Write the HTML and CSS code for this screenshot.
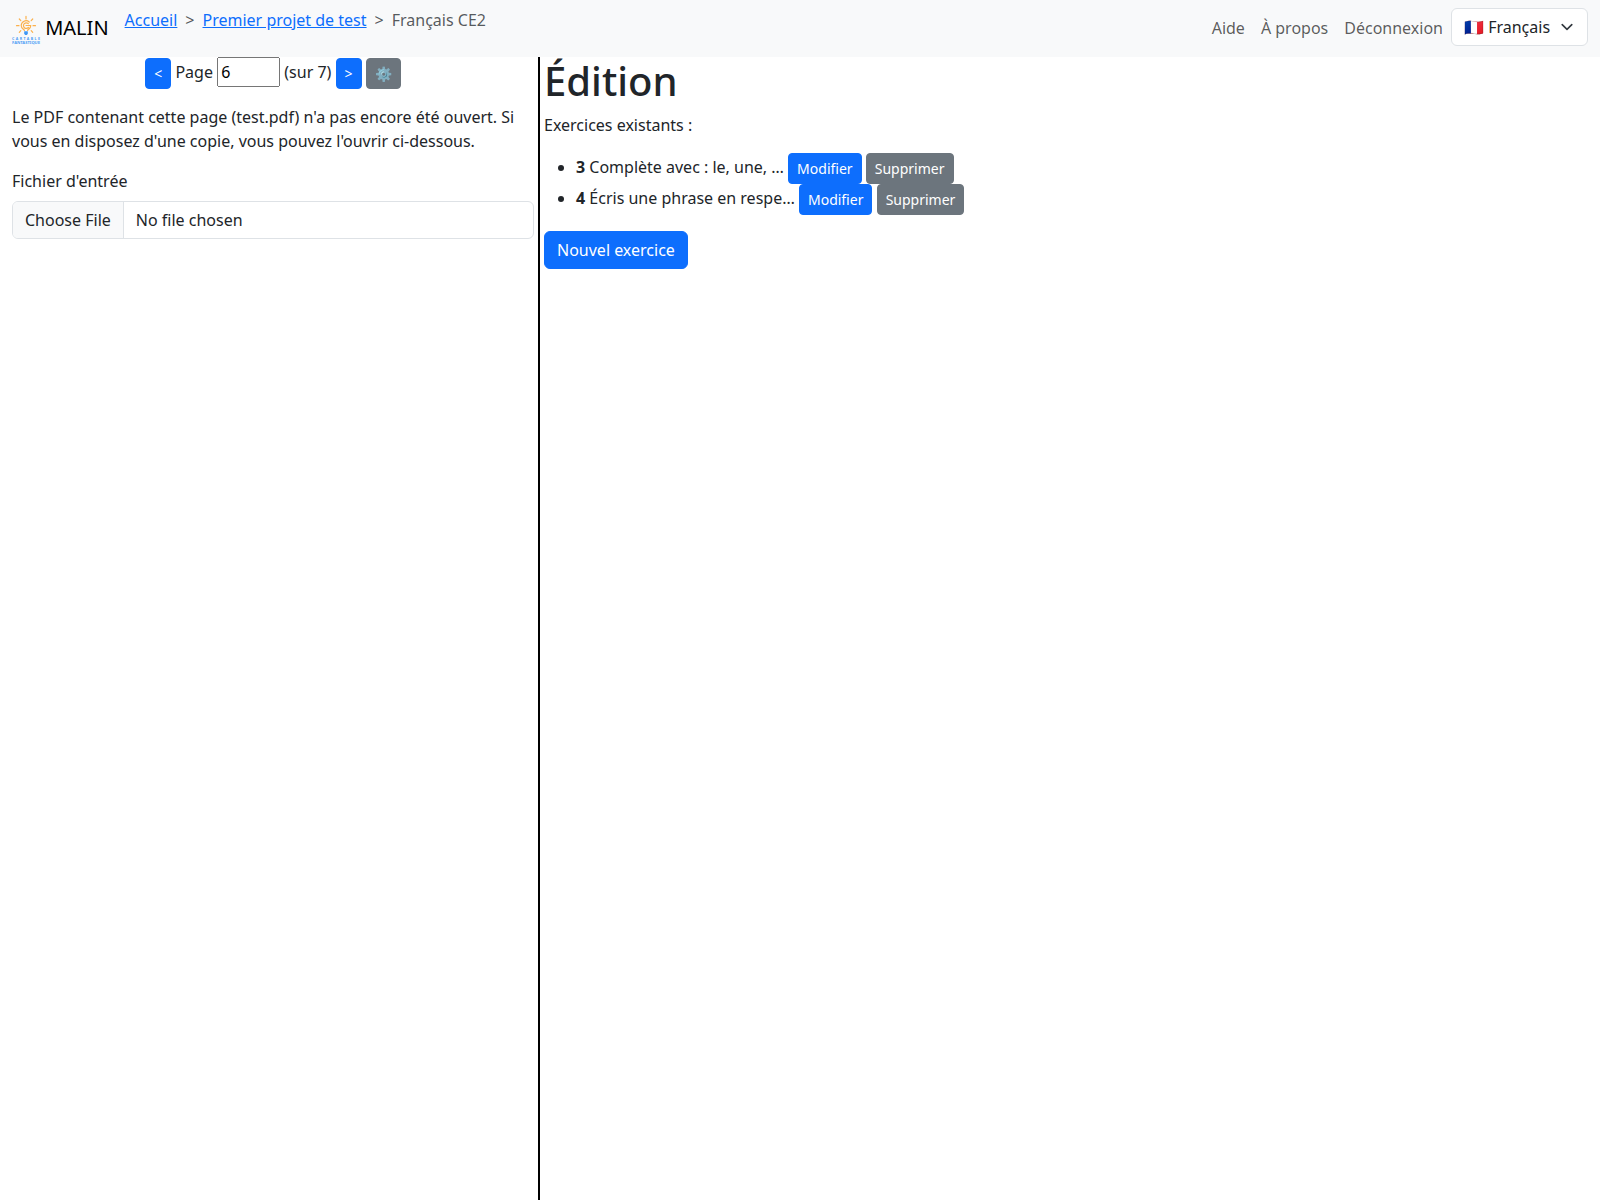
FILE: index.html
```html
<!DOCTYPE html>
<html lang="fr">
<head>
<meta charset="utf-8">
<title>MALIN</title>
<link rel="stylesheet" href="styles.css">
</head>
<body>
<nav class="navbar">
  <a class="brand" href="#"><svg class="logo" viewBox="0 0 28 30" aria-hidden="true">
    <g fill="none" stroke="#fbb14d" stroke-width="1.2" stroke-linecap="round">
      <path d="M14 2.300v2.700M7.300 5l1.500 1.700M20.700 5l-1.500 1.700M4.500 11.700h2.500M21 11.700h2.500M7.300 18.300l1.500-1.700M20.700 18.300l-1.500-1.700"/>
      <path d="M12.400 16.500c-.3-1.200-3.200-2-3.200-5a4.800 4.800 0 0 1 8-3.500M18.800 11.500c0 3-2.900 3.800-3.200 5M16.300 9.700a2.800 2.800 0 1 0 .1 3.800M14 11.500h4.700"/>
    </g>
    <path fill="#3f97f5" d="M12.200 17.300h3.600v2.500l-1 1.300h-1.600l-1-1.300z"/>
    <g class="logo-text" fill="#4c9df5">
      <text x="0" y="26.300" textLength="28">CARTABLE</text>
      <text x="0" y="30" textLength="28" lengthAdjust="spacingAndGlyphs">FANTASTIQUE</text>
    </g>
  </svg> MALIN</a>
  <ol class="breadcrumb">
    <li><a href="#">Accueil</a></li>
    <li><a href="#">Premier projet de test</a></li>
    <li class="current">Français CE2</li>
  </ol>
  <ul class="links">
    <li><a href="#">Aide</a></li>
    <li><a href="#">À propos</a></li>
    <li><a href="#">Déconnexion</a></li>
    <li class="language"><select class="form-select"><option>🇫🇷 Français</option></select><svg class="chevron" viewBox="0 0 16 16" aria-hidden="true"><path d="m2 5 6 6 6-6"/></svg></li>
  </ul>
</nav>
<main class="columns">
  <section class="document">
    <p class="pager"><button class="btn btn-sm primary">&lt;</button> Page <input class="page-number" type="number" value="6"> (sur 7) <button class="btn btn-sm primary">&gt;</button> <button class="btn btn-sm secondary">⚙️</button></p>
    <p>Le PDF contenant cette page (test.pdf) n'a pas encore été ouvert. Si vous en disposez d'une copie, vous pouvez l'ouvrir ci-dessous.</p>
    <label class="form-label" for="pdf">Fichier d'entrée</label>
    <input class="file-input" id="pdf" type="file">
  </section>
  <section class="edition">
    <h1>Édition</h1>
    <p>Exercices existants :</p>
    <ul class="exercises">
      <li><strong>3</strong> Complète avec : le, une, … <button class="btn btn-sm primary">Modifier</button> <button class="btn btn-sm secondary">Supprimer</button></li>
      <li><strong>4</strong> Écris une phrase en respe… <button class="btn btn-sm primary">Modifier</button> <button class="btn btn-sm secondary">Supprimer</button></li>
    </ul>
    <button class="btn primary">Nouvel exercice</button>
  </section>
</main>
</body>
</html>
```

FILE: styles.css
```css
*, *::before, *::after { box-sizing: border-box; }

body {
  margin: 0;
  height: 100vh;
  display: flex;
  flex-direction: column;
  overflow: hidden;
  font-family: "Noto Sans", "Liberation Sans", sans-serif;
  font-size: 16px;
  line-height: 1.5;
  color: #212529;
  background: #fff;
}

button, input, select { margin: 0; font-family: inherit; font-size: inherit; line-height: inherit; }
p { margin: 0 0 16px; }

.navbar {
  display: flex;
  align-items: center;
  flex: none;
  height: 57px;
  padding: 8px 12px;
  background: #f8f9fa;
}
.brand {
  margin-right: 16px;
  font-size: 20px;
  color: #000;
  text-decoration: none;
  white-space: nowrap;
}
.logo { width: 28px; height: 30px; vertical-align: middle; overflow: visible; }
.logo-text { font-size: 3.6px; font-weight: 700; }

.breadcrumb, .links { display: flex; list-style: none; margin: 0; padding: 0; }
.breadcrumb { align-self: flex-start; }
.breadcrumb a { color: #0d6efd; }
.breadcrumb li + li { padding-left: 8px; }
.breadcrumb li + li::before { content: ">"; padding-right: 8px; color: rgba(33, 37, 41, .75); }
.breadcrumb .current { color: rgba(33, 37, 41, .75); }

.links { margin-left: auto; align-self: flex-start; }
.links a { display: block; padding: 8px; color: rgba(0, 0, 0, .65); text-decoration: none; }
.language { position: relative; }
.form-select {
  display: block;
  width: 137px;
  height: 38px;
  padding: 6px 36px 6px 12px;
  color: #212529;
  background: #fff;
  border: 1px solid #dee2e6;
  border-radius: 6px;
  appearance: none;
}
.chevron {
  position: absolute;
  right: 13px;
  top: 11px;
  width: 16px;
  height: 16px;
  fill: none;
  stroke: #343a40;
  stroke-width: 2;
  stroke-linecap: round;
  stroke-linejoin: round;
  transform: scale(.8);
  pointer-events: none;
}

.columns { flex: 1; display: grid; grid-template-columns: 538px 1fr; }
.document { padding: 0 4px 0 12px; }
.edition { padding: 0 12px 0 4px; border-left: 2px solid #000; }

.pager { text-align: center; }
.page-number { width: 63px; }

.btn {
  display: inline-block;
  padding: 6px 12px;
  color: #fff;
  border: 1px solid;
  border-radius: 6px;
  vertical-align: middle;
}
.btn-sm { padding: 4px 8px; font-size: 14px; border-radius: 4px; }
.primary { background: #0d6efd; border-color: #0d6efd; }
.secondary { background: #6c757d; border-color: #6c757d; }

.form-label { display: inline-block; margin-bottom: 8px; }
.file-input {
  display: block;
  width: 100%;
  padding: 6px 12px;
  overflow: hidden;
  color: #212529;
  border: 1px solid #dee2e6;
  border-radius: 6px;
}
.file-input::file-selector-button {
  margin: -6px 12px -6px -12px;
  padding: 6px 12px;
  font: inherit;
  color: #212529;
  background: #f8f9fa;
  border: 0 solid #dee2e6;
  border-right-width: 1px;
}

h1 { margin: 0 0 8px; font-size: 40px; font-weight: 500; line-height: 1.2; }
.exercises { margin: 0 0 16px; padding-left: 32px; }
strong { font-weight: 700; }
```
